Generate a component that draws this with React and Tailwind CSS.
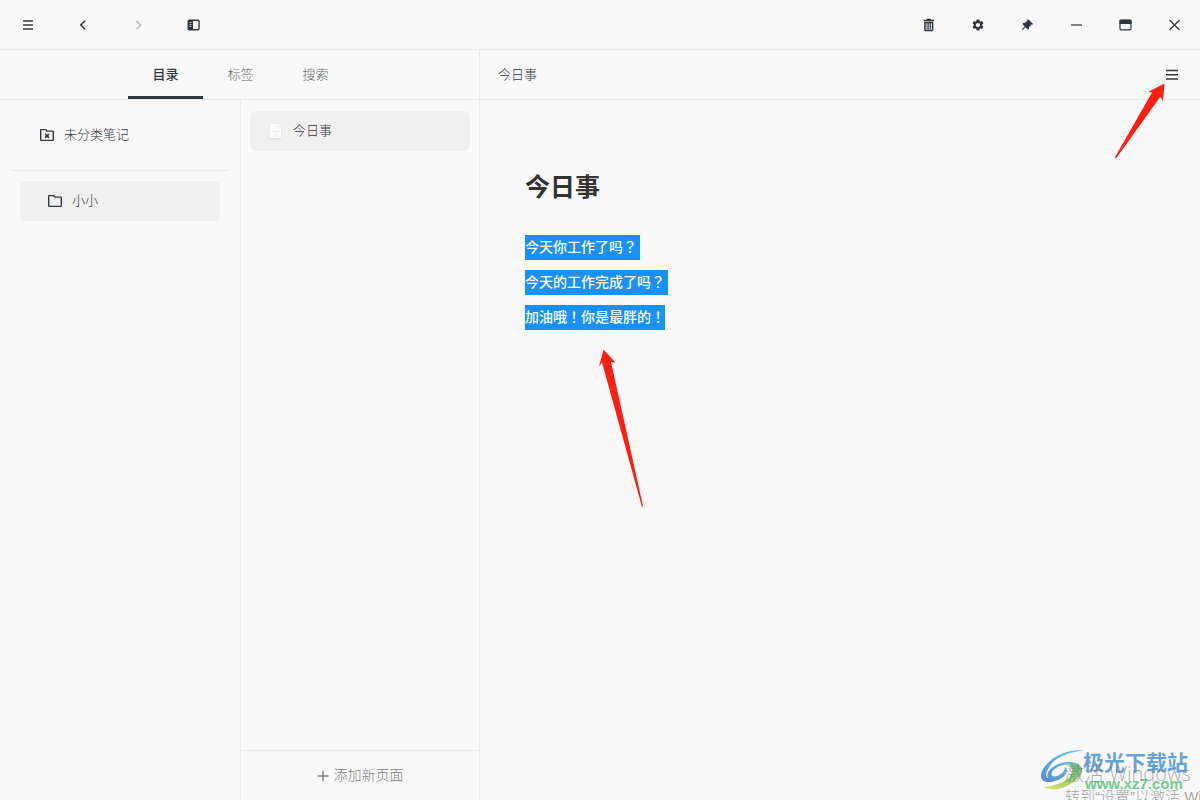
import React from "react";
import { MdSettings } from "react-icons/md";
import { RiPushpinFill } from "react-icons/ri";

function Svg({ size = 16, children, className = "" }) {
  return (
    <svg
      width={size}
      height={size}
      viewBox="0 0 16 16"
      fill="none"
      stroke="currentColor"
      className={`block shrink-0 ${className}`}
      aria-hidden="true"
    >
      {children}
    </svg>
  );
}

const MenuIcon = () => (
  <Svg>
    <path d="M3 4h10M3 8h10M3 12h10" strokeWidth="1.5" />
  </Svg>
);
const BackIcon = () => (
  <Svg>
    <path d="M10 3.8 5.8 8l4.2 4.2" strokeWidth="1.6" />
  </Svg>
);
const ForwardIcon = () => (
  <Svg>
    <path d="M6.500 3.8 10.700 8 6.500 12.2" strokeWidth="1.5" />
  </Svg>
);
const SidebarIcon = () => (
  <Svg>
    <rect x="3.2" y="3.2" width="10.8" height="9.6" rx="1" strokeWidth="1.4" />
    <path d="M3 3h5v10h-5z" fill="currentColor" stroke="none" />
    <path d="M4.500 5.5h2M4.500 7.5h2M4.500 9.5h2" stroke="#dfe1e3" strokeWidth="0.8" />
  </Svg>
);
const TrashIcon = () => (
  <Svg>
    <path d="M2.500 3.5h10.500M5.500 2.5h4.500" strokeWidth="1.4" />
    <path d="M3.900 5.4h7.700v7.6a.6.6 0 0 1-.6.6H4.500a.6.6 0 0 1-.6-.6z" strokeWidth="1.5" />
    <path d="M6.100 6v6.5M7.750 6v6.5M9.400 6v6.5" strokeWidth="1" />
  </Svg>
);
const MinimizeIcon = () => (
  <Svg>
    <path d="M3 8h11" strokeWidth="1.2" />
  </Svg>
);
const MaximizeIcon = () => (
  <Svg>
    <rect x="3" y="3.2" width="11" height="9.6" rx="1" strokeWidth="1.2" />
    <path d="M2.500 4a1.3 1.3 0 0 1 1.3-1.3h9.4A1.3 1.3 0 0 1 14.500 4v3h-12z" fill="currentColor" stroke="none" />
  </Svg>
);
const CloseIcon = () => (
  <Svg>
    <path d="m3.500 3 10 10M13.500 3 3.500 13" strokeWidth="1.3" />
  </Svg>
);
const FolderIcon = ({ crossed }) => (
  <Svg>
    <path
      d="M1.7 3.2a.6.6 0 0 1 .6-.6h4.3L8 4.1h5.7a.6.6 0 0 1 .6.6v8.1a.6.6 0 0 1-.6.6H2.3a.6.6 0 0 1-.6-.6z"
      strokeWidth="1.4"
    />
    {crossed && <path d="m6 6.9 4 4M10 6.9l-4 4" strokeWidth="1.5" />}
  </Svg>
);
const PageIcon = () => (
  <Svg className="drop-shadow-xs">
    <path d="M2.500 1h6.500L13 5v9.4a.6.6 0 0 1-.6.6H2.500a.6.6 0 0 1-.6-.6V1.6A.6.6 0 0 1 2.500 1z" fill="#fff" stroke="none" />
    <path d="M8.500 1h4.5v4.5h-3.6a.9.9 0 0 1-.9-.9z" fill="#f7f7f7" stroke="none" />
    <path d="M4.500 8.5h6M5.500 12h4" stroke="#ececec" strokeWidth="1" />
  </Svg>
);
const PlusIcon = () => (
  <Svg>
    <path d="M2.5 8h11M8 2.5v11" strokeWidth="1.4" />
  </Svg>
);

function IconButton({ label, children, className = "", ...rest }) {
  return (
    <button type="button" aria-label={label} className={`flex size-6 items-center justify-center ${className}`} {...rest}>
      {children}
    </button>
  );
}

function TitleBar() {
  return (
    <header className="flex h-[50px] shrink-0 items-center justify-between border-b border-[#ececec] pr-[14px] pl-4">
      <div className="flex items-center gap-[31px]">
        <IconButton label="菜单"><MenuIcon /></IconButton>
        <IconButton label="后退"><BackIcon /></IconButton>
        <IconButton label="前进" disabled className="text-[#bcbcbc]"><ForwardIcon /></IconButton>
        <IconButton label="侧边栏"><SidebarIcon /></IconButton>
      </div>
      <div className="flex items-center gap-[25px]">
        <IconButton label="回收站"><TrashIcon /></IconButton>
        <IconButton label="设置"><MdSettings size={14} /></IconButton>
        <IconButton label="置顶"><RiPushpinFill size={14} /></IconButton>
        <IconButton label="最小化"><MinimizeIcon /></IconButton>
        <IconButton label="最大化"><MaximizeIcon /></IconButton>
        <IconButton label="关闭"><CloseIcon /></IconButton>
      </div>
    </header>
  );
}

function Sidebar() {
  return (
    <div className="flex w-[480px] shrink-0 flex-col border-r border-[#ececec]">
      <div role="tablist" className="flex h-[50px] shrink-0 justify-center border-b border-[#ececec] pl-[2px]">
        <button type="button" role="tab" aria-selected="true" className="w-[75px] border-b-[3px] border-[#30363d] pt-[1px] font-medium">目录</button>
        <button type="button" role="tab" aria-selected="false" className="w-[75px] pb-[2px] font-light text-[#666]">标签</button>
        <button type="button" role="tab" aria-selected="false" className="w-[75px] pb-[2px] font-light text-[#666]">搜索</button>
      </div>
      <div className="flex min-h-0 flex-1">
        <nav className="flex w-[241px] shrink-0 flex-col border-r border-[#ececec]">
          <div className="mx-[11px] border-b border-[#ececec] py-[15px]">
            <button type="button" className="flex h-10 w-full items-center gap-[9px] pl-7">
              <FolderIcon crossed />
              <span className="pb-[2px] font-light">未分类笔记</span>
            </button>
          </div>
          <button type="button" className="mx-5 mt-[10px] flex h-10 items-center gap-[9px] rounded-md bg-[#f0f0f0] pl-[27px]">
            <FolderIcon />
            <span className="pb-[2px] font-light">小小</span>
          </button>
        </nav>
        <section className="flex min-w-0 flex-1 flex-col">
          <div className="flex-1 px-[9px] py-[11px]">
            <button type="button" className="flex h-10 w-full items-center gap-[9px] rounded-md bg-[#f0f0f0] pl-[18px]">
              <PageIcon />
              <span className="pb-[2px] font-light">今日事</span>
            </button>
          </div>
          <button type="button" className="flex h-[50px] shrink-0 items-center justify-center gap-[3px] border-t border-[#ececec] pr-[2px] text-[14px] text-[#808080]">
            <PlusIcon />
            <span className="pb-[2px] font-light">添加新页面</span>
          </button>
        </section>
      </div>
    </div>
  );
}

const paragraphs = ["今天你工作了吗？", "今天的工作完成了吗？", "加油哦！你是最胖的！"];

function Editor() {
  return (
    <main className="flex min-w-0 flex-1 flex-col">
      <div className="flex h-[50px] shrink-0 items-center justify-between border-b border-[#ececec] pr-4 pl-[18px]">
        <span className="pb-[2px] font-light">今日事</span>
        <IconButton label="页面菜单">
          <Svg>
            <path d="M2 3.5h12M2 7.750h12M2 12h12" strokeWidth="1.6" />
          </Svg>
        </IconButton>
      </div>
      <article className="px-[45px] pt-[65px]">
        <h1 className="text-[25px] leading-10 font-bold text-[#333]">今日事</h1>
        <div className="mt-[30px] flex flex-col items-start gap-[10px] font-['Noto_Sans_CJK_TC',sans-serif]">
          {paragraphs.map((text) => (
            <p key={text} className="bg-[#1890ff] pr-[3px] pb-[2px] text-[14px] leading-[23px] font-medium text-white last:pr-0">{text}</p>
          ))}
        </div>
      </article>
    </main>
  );
}

function Arrows() {
  return (
    <svg className="pointer-events-none absolute top-0 left-0" width="1200" height="800" viewBox="0 0 1200 800" fill="#ff1f12" aria-hidden="true">
      <path d="M603.5 349.5 615.5 362.5 611 362 643 506 642 507 602 362.5 599 366.5z" />
      <path d="M1164.5 83.5 1163 101.5 1160.5 96.5 1116 158.5 1114.8 157.5 1152 92.5 1148 92z" />
    </svg>
  );
}

function Watermark() {
  return (
    <div className="pointer-events-none absolute right-0 bottom-0 h-[54px] w-[162px] overflow-hidden font-['Liberation_Sans','Noto_Sans_CJK_SC',sans-serif] whitespace-nowrap">
      <svg className="absolute top-0 left-0" width="50" height="54" viewBox="0 0 50 54" aria-hidden="true">
        <defs>
          <linearGradient id="swooshBlue" x1="1" y1="0" x2="0" y2="1">
            <stop offset="0" stopColor="#72c6f3" />
            <stop offset="0.5" stopColor="#62aee4" />
            <stop offset="1" stopColor="#5688cc" />
          </linearGradient>
          <linearGradient id="swooshGreen" x1="0" y1="1" x2="1" y2="0">
            <stop offset="0" stopColor="#e6e46a" />
            <stop offset="0.5" stopColor="#9ed267" />
            <stop offset="1" stopColor="#5cbc8c" />
          </linearGradient>
        </defs>
        <path
          d="M45 4.500C34 3 20 7 11 16 3 23 1 31 5 34.500 10 38 21 35 26 30 30 26 29 22 27 21 27 26 21 30.500 16 30.500 12 30 13 25 18 22 25 18 31 17 42 19 36 15 26 15 18 19 11 23 8 28 10 32 6 30 9 23 15 16 23 9 33 6 45 4.500z"
          fill="url(#swooshBlue)"
        />
        <path
          d="M30 18.500C37 16 44 19 44 24 43 33 30 41 20 43 13 44 8 42 5 41 19 40 29 35 33 29 35 25 34 20 30 18.500z"
          fill="url(#swooshGreen)"
        />
      </svg>
      <div className="absolute top-0 left-[45px] font-['Noto_Sans_CJK_SC',sans-serif] text-[21px] leading-[30px] font-bold text-[#68a2da]">极光下载站</div>
      <div className="absolute top-[28px] left-[47px] text-[15px] leading-5 font-bold text-[#6fcd8b]">www.xz7.com</div>
      <div className="absolute top-[14px] left-[26px] font-['Open_Sans','Noto_Sans_CJK_SC',sans-serif] text-[20px] leading-7 font-light text-[#777]/60">激活 Windows</div>
      <div className="absolute top-[41px] left-[27px] text-[15px] leading-5 font-light text-[#777]/70">转到“设置”以激活 Windows。</div>
    </div>
  );
}

export default function App() {
  return (
    <div className="relative flex h-screen flex-col overflow-hidden bg-[#f9f9f9] font-['Noto_Sans_CJK_SC',sans-serif] text-[13px] text-[#30363d]">
      <TitleBar />
      <div className="flex min-h-0 flex-1">
        <Sidebar />
        <Editor />
      </div>
      <Arrows />
      <Watermark />
    </div>
  );
}
